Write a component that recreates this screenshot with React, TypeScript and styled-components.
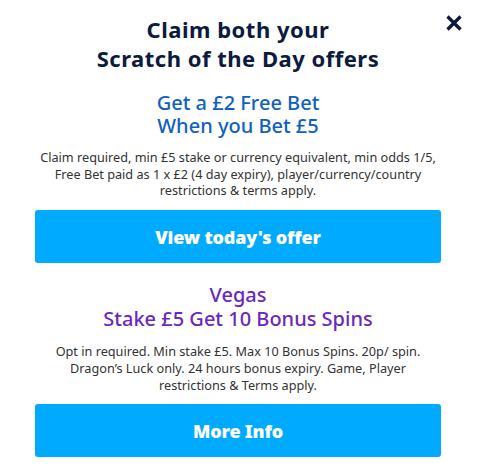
import React from "react";
import styled, { createGlobalStyle } from "styled-components";

const Global = createGlobalStyle`
  html, body { margin: 0; padding: 0; background: #ffffff; }
  body { font-family: "Noto Sans", sans-serif; }
`;

const Modal = styled.div`
  position: relative;
  width: 480px;
  height: 470px;
  box-sizing: border-box;
  padding: 15px 39px 0 35px;
  display: flex;
  flex-direction: column;
  align-items: stretch;
  background: #ffffff;
`;

const Close = styled.button`
  position: absolute;
  top: 15px;
  right: 18px;
  width: 16px;
  height: 16px;
  padding: 0;
  border: 0;
  background: transparent;
  display: flex;
  align-items: center;
  justify-content: center;
`;

const Title = styled.h1`
  margin: 0;
  font-family: "Noto Sans", sans-serif;
  font-weight: 700;
  font-size: 22px;
  line-height: 29px;
  letter-spacing: 0.5px;
  color: #0b1a3d;
  text-align: center;
`;

const Offer = styled.section<{ $top: number }>`
  display: flex;
  flex-direction: column;
  align-items: stretch;
  margin-top: ${(p) => p.$top}px;
`;

const Headline = styled.h2<{ $color: string }>`
  margin: 0;
  font-family: "Noto Sans", sans-serif;
  font-weight: 500;
  font-size: 20px;
  line-height: ${(p) => (p.$color === "#1061bf" ? 23 : 24)}px;
  color: ${(p) => p.$color};
  text-align: center;
`;

const Terms = styled.p`
  margin: 12px 0 0;
  font-family: "Noto Sans", sans-serif;
  font-size: 12.7px;
  line-height: 16.7px;
  color: #333333;
  text-align: center;
  white-space: nowrap;
`;

const Cta = styled.button`
  margin-top: 11px;
  height: 53px;
  border: 0;
  border-radius: 3px;
  background: #00aaff;
  color: #ffffff;
  font-family: "Noto Sans", sans-serif;
  font-weight: 900;
  font-size: 18px;
  letter-spacing: -0.2px;
  cursor: pointer;
`;

export default function App() {
  return (
    <>
      <Global />
      <Modal>
        <Close aria-label="Close">
          <svg width="16" height="16" viewBox="0 0 16 16">
            <path d="M1.5 1.5 L14.5 14.5 M14.5 1.5 L1.5 14.5" stroke="#0b1a3d" strokeWidth="3.3" strokeLinecap="butt" />
          </svg>
        </Close>
        <Title>
          Claim both your
          <br />
          Scratch of the Day offers
        </Title>
        <Offer $top={18}>
          <Headline $color="#1061bf">
            Get a £2 Free Bet
            <br />
            When you Bet £5
          </Headline>
          <Terms>
            Claim required, min £5 stake or currency equivalent, min odds 1/5,
            <br />
            Free Bet paid as 1 x £2 (4 day expiry), player/currency/country
            <br />
            restrictions &amp; terms apply.
          </Terms>
          <Cta>View today's offer</Cta>
        </Offer>
        <Offer $top={20}>
          <Headline $color="#6a28bd">
            Vegas
            <br />
            Stake £5 Get 10 Bonus Spins
          </Headline>
          <Terms>
            Opt in required. Min stake £5. Max 10 Bonus Spins. 20p/ spin.
            <br />
            Dragon’s Luck only. 24 hours bonus expiry. Game, Player
            <br />
            restrictions &amp; Terms apply.
          </Terms>
          <Cta>More Info</Cta>
        </Offer>
      </Modal>
    </>
  );
}
